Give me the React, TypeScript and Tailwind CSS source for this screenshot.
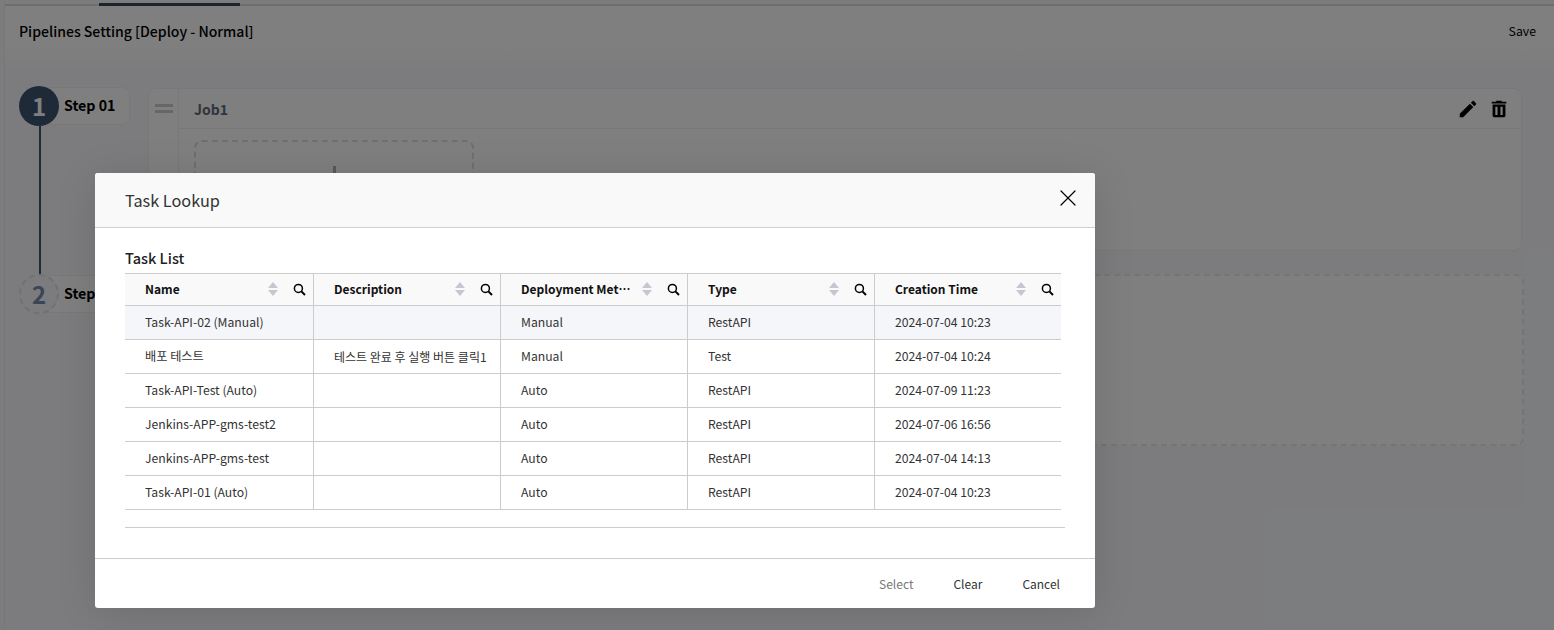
import { X } from "lucide-react";

const columns = [
  { name: "Name", w: "w-[189px]" },
  { name: "Description", w: "w-[187px]" },
  { name: "Deployment Method", w: "w-[187px]" },
  { name: "Type", w: "w-[187px]" },
  { name: "Creation Time", w: "w-[186px]" },
];

const rows = [
  ["Task-API-02 (Manual)", "", "Manual", "RestAPI", "2024-07-04 10:23"],
  ["배포 테스트", "테스트 완료 후 실행 버튼 클릭1", "Manual", "Test", "2024-07-04 10:24"],
  ["Task-API-Test (Auto)", "", "Auto", "RestAPI", "2024-07-09 11:23"],
  ["Jenkins-APP-gms-test2", "", "Auto", "RestAPI", "2024-07-06 16:56"],
  ["Jenkins-APP-gms-test", "", "Auto", "RestAPI", "2024-07-04 14:13"],
  ["Task-API-01 (Auto)", "", "Auto", "RestAPI", "2024-07-04 10:23"],
];

function SortIcon() {
  return (
    <svg width="10" height="14" viewBox="0 0 10 14" className="shrink-0">
      <path d="M5 0 L10 6 L0 6 Z" fill="#c3c7cf" />
      <path d="M5 14 L10 8 L0 8 Z" fill="#c3c7cf" />
    </svg>
  );
}

function SearchIcon() {
  return (
    <svg width="13" height="13" viewBox="0 0 13 13" fill="none" stroke="#000" className="ml-[15px] shrink-0">
      <circle cx="5.4" cy="5.4" r="4" strokeWidth="1.5" />
      <path d="M8.4 8.4 L12 12" strokeWidth="2" />
    </svg>
  );
}

function Step({ n, active, label }: { n: number; active?: boolean; label: string }) {
  return (
    <div className="flex h-10 items-center">
      <div
        className={
          active
            ? "z-10 flex size-10 shrink-0 items-center justify-center rounded-full bg-[#3e5470] text-[24px] font-bold leading-none text-white"
            : "z-10 flex size-10 shrink-0 items-center justify-center rounded-full border-2 border-dashed border-[#e0e2e6] bg-[#f8f9fc] text-[24px] font-bold leading-none text-[#748cac]"
        }
      >
        {n}
      </div>
      <div className="-ml-5 flex h-[38px] w-[91px] shrink-0 items-center rounded-r-lg border border-[#f0f1f3] bg-white pl-[24px] text-[14.2px] font-bold text-black">
        {label}
      </div>
    </div>
  );
}

export default function App() {
  return (
    <div
      className="relative h-[630px] w-[1554px] overflow-hidden bg-[#f8f9fc] text-black"
      style={{ fontFamily: '"Noto Sans CJK KR", "Noto Sans", sans-serif' }}
    >
      {/* page behind the dialog */}
      <div className="ml-1 h-full border-l border-[#eeeeee]">
        <div className="h-[6px] border-b-2 border-[#dddddd] pt-[3px]">
          <div className="ml-[94px] h-[3px] w-[141px] bg-[#34495e]" />
        </div>
        <div className="h-[63px] bg-gradient-to-b from-white from-60% to-[#f8f9fc]">
          <div className="flex items-center justify-between pl-[14px] pr-[18px] pt-[13px]">
            <span className="text-[14.05px] font-medium leading-[24px]">Pipelines Setting [Deploy - Normal]</span>
            <span className="text-[12.3px] leading-[24px] text-[#000000]">Save</span>
          </div>
        </div>
        <div className="mt-[17px] flex pl-[14px] pr-[32px]">
          <div className="w-[129px] shrink-0">
            <Step n={1} active label="Step 01" />
            <div className="ml-[20px] h-[148px] w-[2px] bg-[#3e5470]" />
            <Step n={2} label="Step 02" />
          </div>
          <div className="flex flex-1 flex-col gap-[23px] pt-[2px]">
            <div className="flex h-[163px] w-[1374px] rounded-lg border border-[#eff0f2] bg-white">
              <div className="flex w-[30px] shrink-0 justify-center border-r border-[#eff0f2] pt-[15px]">
                <div className="h-[9px] w-[18px] border-y-[3px] border-[#cccccc]" />
              </div>
              <div className="flex-1">
                <div className="flex h-[40px] items-center justify-between border-b border-[#eff0f2] pl-[15px] pr-[11px]">
                  <span className="pt-[2px] text-[14px] font-bold text-[#5f6b7d]">Job1</span>
                  <div className="flex items-center gap-[9px]">
                    <svg width="22" height="22" viewBox="0 0 24 24" fill="#000">
                      <path d="M20.71 7.04c.39-.39.39-1.04 0-1.41l-2.34-2.34c-.37-.39-1.02-.39-1.41 0l-1.84 1.83 3.75 3.75M3 17.25V21h3.75L17.81 9.93l-3.75-3.75L3 17.25z" />
                    </svg>
                    <svg width="22" height="22" viewBox="0 0 24 24" fill="#000">
                      <path d="M9 3v1H4v2h16V4h-5V3H9z" />
                      <path
                        fillRule="evenodd"
                        d="M5 7h14v12a2 2 0 0 1-2 2H7a2 2 0 0 1-2-2V7zm3 2.5v9h2.4v-9H8zm5.6 0v9H16v-9h-2.4z"
                      />
                    </svg>
                  </div>
                </div>
                <div className="ml-[15px] mt-[11px] flex h-[100px] w-[280px] justify-center rounded-lg border-2 border-dashed border-[#dcdee2] pt-[24px]">
                  <div className="h-[40px] w-[3px] bg-[#aeb3ba]" />
                </div>
              </div>
            </div>
            <div className="h-[172px] w-[1376px] rounded-lg border-2 border-dashed border-[#e9eaee] bg-white" />
          </div>
        </div>
      </div>

      {/* overlay */}
      <div className="absolute inset-0 z-20 bg-black/50 pl-[95px] pt-[173px]">
        <div className="flex h-[435px] w-[1000px] flex-col rounded-[3px] bg-white shadow-[0_4px_40px_rgba(0,0,0,0.12)]">
          <div className="flex h-[55px] shrink-0 items-center justify-between rounded-t-[3px] border-b border-[#cfcfcf] bg-[#f9f9f9] pl-[30px] pr-[13px]">
            <span className="text-[16.3px] leading-none text-[#333333]">Task Lookup</span>
            <X size={28} strokeWidth={1.05} className="-mt-1 text-black" />
          </div>
          <div className="flex-1 pl-[30px] pt-[19px]">
            <div className="mb-[5px] text-[14.5px] font-medium leading-[21px] text-[#222222]">Task List</div>
            <div className="w-[936px]">
              <div className="flex h-[33px] border-y border-[#cccccc] bg-[#f9f9f9]">
                {columns.map((c, i) => (
                  <div
                    key={c.name}
                    className={`flex items-center pb-px pl-5 pr-[7px] ${c.w} ${i < 4 ? "border-r border-[#cccccc]" : ""}`}
                  >
                    <span className="min-w-0 flex-1 truncate pr-[6px] text-[12px] font-bold text-[#111111]">{c.name}</span>
                    <SortIcon />
                    <SearchIcon />
                  </div>
                ))}
              </div>
              {rows.map((r, ri) => (
                <div
                  key={ri}
                  className={`flex h-[34px] border-b border-[#cccccc] ${ri === 0 ? "bg-[#f5f6fa]" : "bg-white"}`}
                >
                  {r.map((cell, i) => (
                    <div
                      key={i}
                      className={`flex items-center overflow-hidden pl-5 text-[#333333] ${i === 1 ? "text-[12px]" : "text-[12.2px]"} ${columns[i].w} ${i < 4 ? "border-r border-[#cccccc]" : ""}`}
                    >
                      <span className="whitespace-nowrap">{cell}</span>
                    </div>
                  ))}
                </div>
              ))}
            </div>
            <div className="mt-[17px] w-[940px] border-b border-[#cccccc]" />
          </div>
          <div className="flex h-[50px] shrink-0 items-center justify-end gap-10 border-t border-[#cccccc] pr-[35px] text-[12px] text-[#333333]">
            <span className="text-[#777777]">Select</span>
            <span>Clear</span>
            <span>Cancel</span>
          </div>
        </div>
      </div>
    </div>
  );
}
